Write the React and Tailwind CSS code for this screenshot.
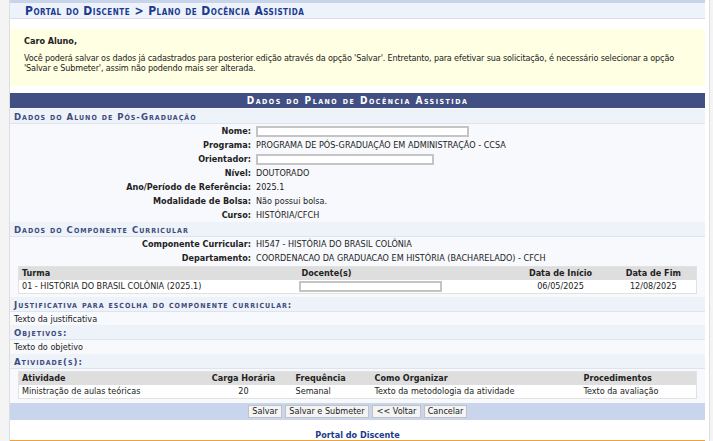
import React from "react";

const font = { fontFamily: '"DejaVu Sans Condensed", "DejaVu Sans", Verdana, sans-serif' };

const Redacted = ({ w }) => (
  <span className={`inline-block h-[11px] border-2 border-[#c4c4c4] bg-white align-middle ${w}`} />
);

const SubHeader = ({ children }) => (
  <div className="h-[15px] bg-[#eef2f9] border-b border-[#dde4f0] pl-[4px] text-[9.5px] font-bold tracking-[1px] text-[#3e4b7c] [font-variant:small-caps] leading-[15px]">
    {children}
  </div>
);

const Field = ({ label, children }) => (
  <>
    <div className="text-right font-bold">{label}:</div>
    <div>{children}</div>
  </>
);

const buttons = [
  ["Salvar", "w-[34px]"],
  ["Salvar e Submeter", "w-[84px]"],
  ["<< Voltar", "w-[49px]"],
  ["Cancelar", "w-[43px]"],
];

export default function App() {
  return (
    <div style={font} className="w-[713px] h-[441px] overflow-hidden bg-white text-[9px] text-[#222] flex">
      <div className="w-[10px] shrink-0 bg-[#f4f4f4] border-r border-[#dedede]" />
      <div className="w-[695px] shrink-0">
        <div className="h-[3px] bg-[#c8d4ea]" />
        <div className="h-[16px] bg-[#eef3fb] border-b border-[#d5def0] pl-[15px] text-[12px] font-bold text-[#1a3a8f] [font-variant:small-caps] tracking-[0.5px] leading-[16px]">
          Portal do Discente &gt; Plano de Docência Assistida
        </div>

        <div className="mt-[10px] h-[57px] bg-[#ffffe3] px-[14px] pt-[7px]">
          <div className="font-bold leading-[11px]">Caro Aluno,</div>
          <p className="mt-[6px] leading-[10px] tracking-[-0.15px]">
            Você poderá salvar os dados já cadastrados para posterior edição através da opção 'Salvar'. Entretanto, para efetivar sua solicitação, é necessário selecionar a opção 'Salvar e Submeter', assim não podendo mais ser alterada.
          </p>
        </div>

        <div className="mt-[7px] bg-[#f7f9fc]">
          <div className="h-[15px] bg-[#414f82] text-center text-white font-bold text-[10px] tracking-[1.5px] [font-variant:small-caps] leading-[15px]">
            Dados do Plano de Docência Assistida
          </div>
          <div className="pt-[1px]">
            <SubHeader>Dados do Aluno de Pós-Graduação</SubHeader>
          </div>
          <div className="grid grid-cols-[241px_1fr] gap-x-[5px] auto-rows-[14px] leading-[14px]">
            <Field label="Nome"><Redacted w="w-[213px]" /></Field>
            <Field label="Programa">PROGRAMA DE PÓS-GRADUAÇÃO EM ADMINISTRAÇÃO - CCSA</Field>
            <Field label="Orientador"><Redacted w="w-[178px]" /></Field>
            <Field label="Nível">DOUTORADO</Field>
            <Field label="Ano/Período de Referência">2025.1</Field>
            <Field label="Modalidade de Bolsa">Não possui bolsa.</Field>
            <Field label="Curso">HISTÓRIA/CFCH</Field>
          </div>
          <SubHeader>Dados do Componente Curricular</SubHeader>
          <div className="grid grid-cols-[241px_1fr] gap-x-[5px] auto-rows-[14px] leading-[14px]">
            <Field label="Componente Curricular">HI547 - HISTÓRIA DO BRASIL COLÔNIA</Field>
            <Field label="Departamento">COORDENACAO DA GRADUACAO EM HISTÓRIA (BACHARELADO) - CFCH</Field>
          </div>
          <div className="px-[8px] pt-[1px] pb-[3px]">
            <table className="w-full border border-[#e2e2e2] border-collapse">
              <thead>
                <tr className="bg-[#dedede] h-[13px] leading-[13px]">
                  <th className="text-left pl-[3px] font-bold w-[280px]">Turma</th>
                  <th className="text-left pl-[3px] font-bold">Docente(s)</th>
                  <th className="text-center font-bold w-[100px]">Data de Início</th>
                  <th className="text-center font-bold w-[86px]">Data de Fim</th>
                </tr>
              </thead>
              <tbody>
                <tr className="bg-white h-[13px] leading-[13px]">
                  <td className="pl-[3px]">01 - HISTÓRIA DO BRASIL COLÔNIA (2025.1)</td>
                  <td><Redacted w="w-[143px]" /></td>
                  <td className="text-center">06/05/2025</td>
                  <td className="text-center">12/08/2025</td>
                </tr>
              </tbody>
            </table>
          </div>
          <SubHeader>Justificativa para escolha do componente curricular:</SubHeader>
          <div className="h-[13px] leading-[14px] pl-[4px]">Texto da justificativa</div>
          <SubHeader>Objetivos:</SubHeader>
          <div className="h-[14px] leading-[14px] pl-[4px]">Texto do objetivo</div>
          <SubHeader>Atividade(s):</SubHeader>
          <div className="px-[8px] pt-[2px] pb-[4px]">
            <table className="w-full border border-[#e2e2e2] border-collapse">
              <thead>
                <tr className="bg-[#dedede] h-[13px] leading-[13px]">
                  <th className="text-left pl-[3px] font-bold w-[184px]">Atividade</th>
                  <th className="text-center font-bold w-[82px]">Carga Horária</th>
                  <th className="text-left font-bold w-[90px] pl-[11px]">Frequência</th>
                  <th className="text-left font-bold w-[209px]">Como Organizar</th>
                  <th className="text-left font-bold">Procedimentos</th>
                </tr>
              </thead>
              <tbody>
                <tr className="bg-white h-[13px] leading-[13px]">
                  <td className="pl-[3px]">Ministração de aulas teóricas</td>
                  <td className="text-center">20</td>
                  <td className="pl-[11px]">Semanal</td>
                  <td>Texto da metodologia da atividade</td>
                  <td>Texto da avaliação</td>
                </tr>
              </tbody>
            </table>
          </div>
          <div className="h-[17px] bg-[#c8d5ec] flex items-center justify-center gap-[3px]">
            {buttons.map(([b, w]) => (
              <button
                key={b}
                style={font}
                className={`h-[13px] ${w} text-center text-[9px] leading-[11px] text-[#222] bg-[#f4f4f4] border border-[#c2c2c2]`}
              >
                {b}
              </button>
            ))}
          </div>
        </div>

        <div className="h-[20px] pt-[10px] text-center font-bold text-[#1a3a8f] leading-[10px]">Portal do Discente</div>
        <div className="h-[2px] bg-[#eea23c]" />
      </div>
      <div className="w-[4px] shrink-0 bg-white" />
      <div className="flex-1 bg-[#f4f4f4] border-l border-[#dedede]" />
    </div>
  );
}
